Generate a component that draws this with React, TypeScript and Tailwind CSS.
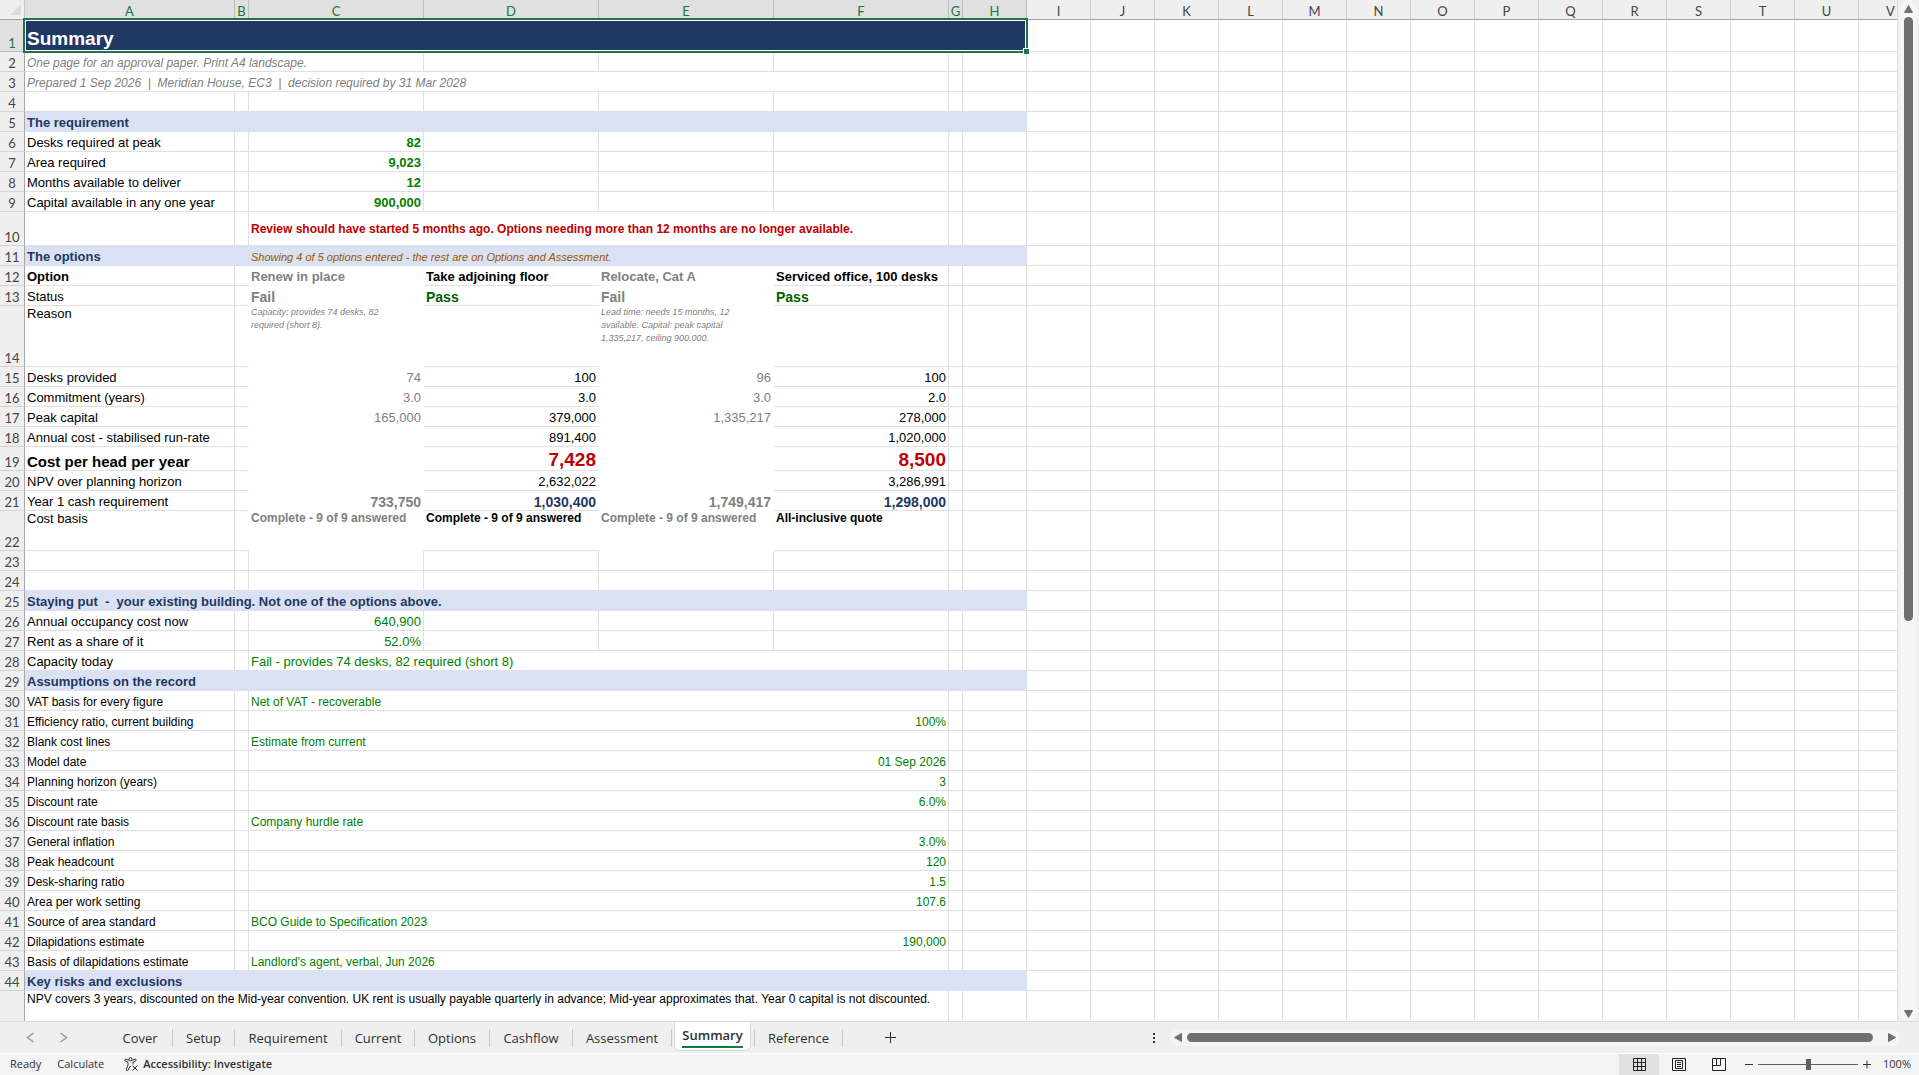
import { ReactNode } from "react";

type Cell = { t?: ReactNode; c?: string; span?: number };
type Row = { n?: number; h?: string; kind?: "band" | "title"; cells: Cell[] };

const COLS = ["A", "B", "C", "D", "E", "F", "G", "H", "I", "J", "K", "L", "M", "N", "O", "P", "Q", "R", "S", "T", "U", "V"];
const COL_WIDTHS = ["w-[210px]", "w-[14px]", "w-[175px]", "w-[175px]", "w-[175px]", "w-[175px]", "w-[14px]"];

const LINE = "border-r border-b border-[#e0e0e0]";
const BAND = "border-r border-b border-[#d9e1f2] bg-[#d9e1f2] font-bold text-[#1f3864]";
const NONE = "border-r border-b border-white";
const OVER_BAND = "border-r border-b border-b-[#d9e1f2] border-r-[#e0e0e0]";
const OPEN_RIGHT = "border-r border-b border-b-[#e0e0e0] border-r-white";
const GREEN = "text-[#008000]";
const NUM = "text-right";
const MUTED = "text-[#808080]";

const label = (t: ReactNode, c = ""): Cell => ({ t, c: `${LINE} ${c}` });
const blank: Cell = { c: LINE };
const gh: Cell[] = [blank, blank];
const empties = (count: number, c = LINE): Cell[] => Array.from({ length: count }, () => ({ c }));

const need = (n: number, t: string, v: string): Row => ({
  n,
  cells: [label(t), blank, { t: v, c: `${LINE} ${NUM} font-bold ${GREEN}` }, blank, blank, blank, ...gh],
});

/* Failing options (C and E) have no grid lines of their own. */
const option = (n: number, head: Cell, v: string[], cls: string[], h?: string): Row => ({
  n,
  h,
  cells: [
    head,
    { c: OPEN_RIGHT },
    { t: v[0], c: `${NONE} ${MUTED} ${cls[0]}` },
    { t: v[1], c: `${OPEN_RIGHT} ${cls[1]}` },
    { t: v[2], c: `${NONE} ${MUTED} ${cls[0]}` },
    { t: v[3], c: `${LINE} ${cls[1]}` },
    ...gh,
  ],
});

const assume = (n: number, t: string, v: string, right = false): Row => {
  const line = n === 43 ? OVER_BAND : LINE;
  return {
    n,
    cells: [
      { t, c: `${line} text-xs` },
      { c: line },
      { t: v, span: 4, c: `${line} ${GREEN} ${right ? "text-right" : ""} text-xs` },
      ...empties(2, line),
    ],
  };
};

const rows: Row[] = [
  {
    n: 1,
    h: "h-8",
    kind: "title",
    cells: [{ t: "Summary", span: 8, c: "relative border-r border-b border-[#217346] bg-[#203864] pb-0.5 text-[19px] leading-5 font-bold text-white" }],
  },
  { n: 2, cells: [{ t: "One page for an approval paper. Print A4 landscape.", span: 3, c: `${LINE} text-xs italic ${MUTED}` }, ...empties(5)] },
  { n: 3, cells: [{ t: "Prepared 1 Sep 2026 \u00a0|\u00a0 Meridian House, EC3 \u00a0|\u00a0 decision required by 31 Mar 2028", span: 6, c: `${LINE} text-xs italic ${MUTED}` }, ...gh] },
  { n: 4, cells: empties(8, OVER_BAND) },
  { n: 5, kind: "band", cells: [{ t: "The requirement", span: 8, c: BAND }] },
  need(6, "Desks required at peak", "82"),
  need(7, "Area required", "9,023"),
  need(8, "Months available to deliver", "12"),
  need(9, "Capital available in any one year", "900,000"),
  {
    n: 10,
    h: "h-[34px]",
    cells: [
      ...empties(2, OVER_BAND),
      { t: "Review should have started 5 months ago. Options needing more than 12 months are no longer available.", span: 4, c: `${OVER_BAND} align-middle text-xs font-bold text-[#c00000]` },
      ...empties(2, OVER_BAND),
    ],
  },
  {
    n: 11,
    kind: "band",
    cells: [
      { t: "The options", span: 2, c: BAND },
      { t: "Showing 4 of 5 options entered - the rest are on Options and Assessment.", span: 6, c: "border-r border-b border-[#d9e1f2] bg-[#d9e1f2] text-[11px] text-[#9c5700] italic" },
    ],
  },
  {
    n: 12,
    cells: [
      label("Option", "font-bold"),
      { c: OPEN_RIGHT },
      { t: "Renew in place", c: `${NONE} ${MUTED} font-bold` },
      { t: "Take adjoining floor", c: `${OPEN_RIGHT} font-bold` },
      { t: "Relocate, Cat A", c: `${NONE} ${MUTED} font-bold` },
      { t: "Serviced office, 100 desks", c: `${LINE} font-bold` },
      ...gh,
    ],
  },
  option(13, label("Status"), ["Fail", "Pass", "Fail", "Pass"], ["text-[14px] font-bold", "text-[14px] font-bold text-[#006100]"]),
  option(
    14,
    label("Reason", "align-top"),
    ["Capacity: provides 74 desks, 82 required (short 8).", "", "Lead time: needs 15 months, 12 available. Capital: peak capital 1,335,217, ceiling 900,000.", ""],
    ["align-top text-[9px] leading-[13px] whitespace-normal! italic pr-5!", ""],
    "h-[61px]",
  ),
  option(15, label("Desks provided"), ["74", "100", "96", "100"], [NUM, NUM]),
  option(16, label("Commitment (years)"), ["3.0", "3.0", "3.0", "2.0"], [NUM, NUM]),
  option(17, label("Peak capital"), ["165,000", "379,000", "1,335,217", "278,000"], [NUM, NUM]),
  option(18, label("Annual cost - stabilised run-rate"), ["", "891,400", "", "1,020,000"], [NUM, NUM]),
  option(19, label("Cost per head per year", "text-[15px] font-bold"), ["", "7,428", "", "8,500"], [NUM, "text-right text-[19px] leading-5 font-bold text-[#c00000]"], "h-6"),
  option(20, label("NPV over planning horizon"), ["", "2,632,022", "", "3,286,991"], [NUM, NUM]),
  option(21, label("Year 1 cash requirement"), ["733,750", "1,030,400", "1,749,417", "1,298,000"], ["text-right text-[14px] font-bold", "text-right text-[14px] font-bold text-[#1f3864]"]),
  option(
    22,
    label("Cost basis", "align-top"),
    ["Complete - 9 of 9 answered", "Complete - 9 of 9 answered", "Complete - 9 of 9 answered", "All-inclusive quote"],
    ["align-top text-xs leading-[14px] font-bold", "align-top text-xs leading-[14px] font-bold"],
    "h-10",
  ),
  { n: 23, cells: empties(8) },
  { n: 24, cells: empties(8, OVER_BAND) },
  { n: 25, kind: "band", cells: [{ t: "Staying put \u00a0-\u00a0 your existing building. Not one of the options above.", span: 8, c: BAND }] },
  { n: 26, cells: [label("Annual occupancy cost now"), blank, { t: "640,900", c: `${LINE} ${NUM} ${GREEN}` }, ...empties(5)] },
  { n: 27, cells: [label("Rent as a share of it"), blank, { t: "52.0%", c: `${LINE} ${NUM} ${GREEN}` }, ...empties(5)] },
  {
    n: 28,
    cells: [
      { t: "Capacity today", c: OVER_BAND },
      { c: OVER_BAND },
      { t: "Fail - provides 74 desks, 82 required (short 8)", span: 4, c: `${OVER_BAND} ${GREEN}` },
      ...empties(2, OVER_BAND),
    ],
  },
  { n: 29, kind: "band", cells: [{ t: "Assumptions on the record", span: 8, c: BAND }] },
  assume(30, "VAT basis for every figure", "Net of VAT - recoverable"),
  assume(31, "Efficiency ratio, current building", "100%", true),
  assume(32, "Blank cost lines", "Estimate from current"),
  assume(33, "Model date", "01 Sep 2026", true),
  assume(34, "Planning horizon (years)", "3", true),
  assume(35, "Discount rate", "6.0%", true),
  assume(36, "Discount rate basis", "Company hurdle rate"),
  assume(37, "General inflation", "3.0%", true),
  assume(38, "Peak headcount", "120", true),
  assume(39, "Desk-sharing ratio", "1.5", true),
  assume(40, "Area per work setting", "107.6", true),
  assume(41, "Source of area standard", "BCO Guide to Specification 2023"),
  assume(42, "Dilapidations estimate", "190,000", true),
  assume(43, "Basis of dilapidations estimate", "Landlord's agent, verbal, Jun 2026"),
  { n: 44, kind: "band", cells: [{ t: "Key risks and exclusions", span: 8, c: BAND }] },
  {
    h: "h-[62px]",
    cells: [
      {
        t: "NPV covers 3 years, discounted on the Mid-year convention. UK rent is usually payable quarterly in advance; Mid-year approximates that. Year 0 capital is not discounted.",
        span: 6,
        c: `${LINE} align-top text-xs`,
      },
      ...gh,
    ],
  },
];

function Sheet() {
  return (
    <table className="w-full table-fixed border-separate border-spacing-0 font-['Liberation_Sans',Arial,sans-serif] text-[13px] leading-4 text-black">
      <colgroup>
        <col className="w-[25px]" />
        {COLS.map((c, i) => (
          <col key={c} className={COL_WIDTHS[i] ?? "w-16"} />
        ))}
      </colgroup>
      <thead>
        <tr className="h-5 font-['Lato',sans-serif] text-[13px]">
          <th scope="col" aria-label="Select all" className="border-r border-b border-[#a6a6a6] border-r-[#c8c8c8] bg-[#efefef] p-0 align-bottom">
            <svg className="mb-1 ml-2.5 block" width="11" height="11" aria-hidden="true">
              <path d="M11 0V11H0Z" fill="#dcdcdc" />
            </svg>
          </th>
          {COLS.map((c, i) => (
            <th
              key={c}
              scope="col"
              className={
                i < 8
                  ? "border-r border-b border-r-[#bdbdbd] border-b-[#217346] bg-[#e0e0e0] p-0 text-center align-bottom font-normal text-[#217346]"
                  : "border-r border-b border-r-[#cfcfcf] border-b-[#a6a6a6] bg-[#efefef] p-0 text-center align-bottom font-normal text-[#444444]"
              }
            >
              {c}
            </th>
          ))}
        </tr>
      </thead>
      <tbody>
        {rows.map((r, i) => (
          <tr key={i} className={r.h ?? "h-5"}>
            <th
              scope="row"
              className={
                r.kind === "title"
                  ? "border-r border-b border-r-[#217346] border-b-[#bdbdbd] bg-[#e0e0e0] p-0 text-center align-bottom font-['Lato',sans-serif] font-normal text-[#217346]"
                  : "border-r border-b border-r-[#a6a6a6] border-b-[#d4d4d4] bg-[#efefef] p-0 text-center align-bottom font-['Lato',sans-serif] font-normal text-[#444444]"
              }
            >
              {r.n}
            </th>
            {r.cells.map((cell, j) => (
              <td key={j} colSpan={cell.span} className={`px-0.5 align-bottom whitespace-nowrap ${cell.c ?? ""}`}>
                {cell.t}
                {r.kind === "title" && (
                  <>
                    <span className="absolute -inset-0.5 border-2 border-[#217346]" />
                    <span className="absolute inset-0 border border-white" />
                    <span className="absolute -right-[3px] -bottom-[3px] size-1.5 border-t border-l border-white bg-[#217346]" />
                  </>
                )}
              </td>
            ))}
            {COLS.slice(8).map((c) => (
              <td key={c} className={`p-0 ${LINE}`} />
            ))}
          </tr>
        ))}
      </tbody>
    </table>
  );
}

const TABS = [
  { name: "Cover", w: "w-[65px]" },
  { name: "Setup", w: "w-[62px]" },
  { name: "Requirement", w: "w-[107px]" },
  { name: "Current", w: "w-[73px]" },
  { name: "Options", w: "w-[75px]" },
  { name: "Cashflow", w: "w-[83px]" },
  { name: "Assessment", w: "w-[99px]" },
  { name: "Summary", w: "w-[77px]" },
  { name: "Reference", w: "w-[89px] border-l" },
];

export default function App() {
  return (
    <div className="flex h-screen flex-col overflow-hidden bg-[#efefef] font-['Open_Sans','Noto_Sans',sans-serif]">
      <main className="flex min-h-0 flex-1">
        <div className="min-w-0 flex-1 overflow-hidden border-r border-[#e0e0e0] bg-white">
          <Sheet />
        </div>
        <div className="flex w-[21px] shrink-0 flex-col items-center">
          <div className="flex w-[17px] flex-1 flex-col items-center rounded-full bg-[#f5f5f5]">
            <button aria-label="Scroll up" className="flex h-[17px] items-center">
              <svg width="9" height="8" aria-hidden="true"><path d="M4.500 0.500L8.500 7.500H.5Z" fill="#707070" stroke="#707070" strokeLinejoin="round" /></svg>
            </button>
            <div className="flex w-full flex-1 flex-col items-center">
              <div className="h-[61%] w-[9px] rounded-full bg-[#707070]" />
            </div>
            <button aria-label="Scroll down" className="flex h-[14px] items-center">
              <svg width="9" height="8" aria-hidden="true"><path d="M4.500 7.500L8.500 .5H.5Z" fill="#707070" stroke="#707070" strokeLinejoin="round" /></svg>
            </button>
          </div>
        </div>
      </main>

      <nav aria-label="Sheets" className="flex h-8 shrink-0 items-center border-t border-[#dcdcdc] text-[13px] text-[#303030]">
        <button aria-label="Previous sheet" className="ml-[26px] text-[#9a9a9a]">
          <svg width="9" height="11" fill="none" stroke="currentColor" strokeWidth="1.500" aria-hidden="true"><path d="M7.500 1L1.500 5.500L7.500 10" /></svg>
        </button>
        <button aria-label="Next sheet" className="ml-6 text-[#9a9a9a]">
          <svg width="9" height="11" fill="none" stroke="currentColor" strokeWidth="1.500" aria-hidden="true"><path d="M1.500 1L7.500 5.500L1.500 10" /></svg>
        </button>
        <div className="ml-10 flex h-full items-center">
          {TABS.map((t) =>
            t.name === "Summary" ? (
              <button key={t.name} aria-current="page" className="mr-[3px] ml-0.5 flex h-[29px] w-[77px] items-center justify-center self-start rounded-b-md border border-t-0 border-[#dcdcdc] bg-white font-semibold">
                <span className="border-b-2 border-[#107c41] leading-[21px]">{t.name}</span>
              </button>
            ) : (
              <button key={t.name} className={`h-[18px] border-r border-[#c8c8c8] text-center leading-[18px] ${t.w}`}>
                {t.name}
              </button>
            ),
          )}
        </div>
        <button aria-label="New sheet" className="ml-[42px]">
          <svg width="11" height="11" stroke="#303030" aria-hidden="true"><path d="M5.500 0V11M0 5.500H11" /></svg>
        </button>
        <div className="flex-1" />
        <div className="mr-[19px] flex w-[747px] items-center">
          <svg width="2" height="10" fill="#333" aria-hidden="true"><path d="M0 0h2v2H0zM0 4h2v2H0zM0 8h2v2H0z" /></svg>
          <div className="ml-[15px] flex h-[17px] flex-1 items-center rounded-full bg-[#f5f5f5]">
            <button aria-label="Scroll left" className="ml-1">
              <svg width="8" height="9" aria-hidden="true"><path d="M.5 4.500L7.500 .5V8.500Z" fill="#707070" stroke="#707070" strokeLinejoin="round" /></svg>
            </button>
            <div className="mr-[15px] ml-[5px] h-[9px] flex-1 rounded-full bg-[#707070]" />
            <button aria-label="Scroll right" className="mr-1">
              <svg width="8" height="9" aria-hidden="true"><path d="M7.500 4.500L.5 .5V8.500Z" fill="#707070" stroke="#707070" strokeLinejoin="round" /></svg>
            </button>
          </div>
        </div>
      </nav>

      <footer className="flex h-[22px] shrink-0 items-center border-t border-white bg-[#f4f4f4] text-[11px] text-[#303030]">
        <span className="ml-2.5">Ready</span>
        <span className="ml-4">Calculate</span>
        <button className="ml-5 flex items-center gap-1 font-semibold">
          <svg width="15" height="15" viewBox="0 0 15 15" fill="none" stroke="#303030" aria-hidden="true">
            <circle cx="6.500" cy="2.300" r="1.600" />
            <path d="M4.800 3.200L2 2.200C.6 1.900 .3 3.600 1.500 4.100L4 5.200V8L2.200 12.500C1.900 13.800 3.500 14.300 4 13.200L6 9.500H7M8.200 3.200L11 2.200C12.400 1.900 12.700 3.600 11.500 4.100L9 5.200V7.500M8.500 8.500L13.500 13.500M13.500 8.500L8.500 13.500" />
          </svg>
          Accessibility: Investigate
        </button>
        <div className="flex-1" />
        <button aria-label="Normal view" className="flex h-full w-10 items-center justify-center bg-[#e0e0e0]">
          <svg width="13" height="13" fill="none" stroke="#222" aria-hidden="true"><path d="M.5 .5h12v12H.5zM4.500 0v13M8.500 0v13M0 4.500h13M0 8.500h13" /></svg>
        </button>
        <button aria-label="Page layout" className="flex h-full w-10 items-center justify-center">
          <svg width="14" height="13" fill="none" stroke="#222" aria-hidden="true"><path d="M.5 .5h13v12H.5zM3.500 2.500h7v8h-7zM5 4.500h4M5 6.500h4M5 8.500h4" /></svg>
        </button>
        <button aria-label="Page break preview" className="flex h-full w-10 items-center justify-center">
          <svg width="14" height="13" fill="none" stroke="#222" aria-hidden="true"><path d="M.5 .5h13v12H.5zM.5 7.500h8M4.500 0v7.500M8.500 0v7.500" /></svg>
        </button>
        <button aria-label="Zoom out" className="ml-1.5">
          <svg width="8" height="9" stroke="#303030" aria-hidden="true"><path d="M0 4.500H8" /></svg>
        </button>
        <input
          type="range"
          aria-label="Zoom"
          min={10}
          max={190}
          defaultValue={100}
          className="mx-[5px] h-3 w-[100px] appearance-none bg-[linear-gradient(#606060,#606060)] bg-[length:100%_1px] bg-center bg-no-repeat [&::-webkit-slider-thumb]:h-[11px] [&::-webkit-slider-thumb]:w-[5px] [&::-webkit-slider-thumb]:appearance-none [&::-webkit-slider-thumb]:bg-[#606060]"
        />
        <button aria-label="Zoom in">
          <svg width="8" height="9" stroke="#303030" aria-hidden="true"><path d="M0 4.500H8M4 .5V8.500" /></svg>
        </button>
        <span className="w-12 pr-2 text-right">100%</span>
      </footer>
    </div>
  );
}
